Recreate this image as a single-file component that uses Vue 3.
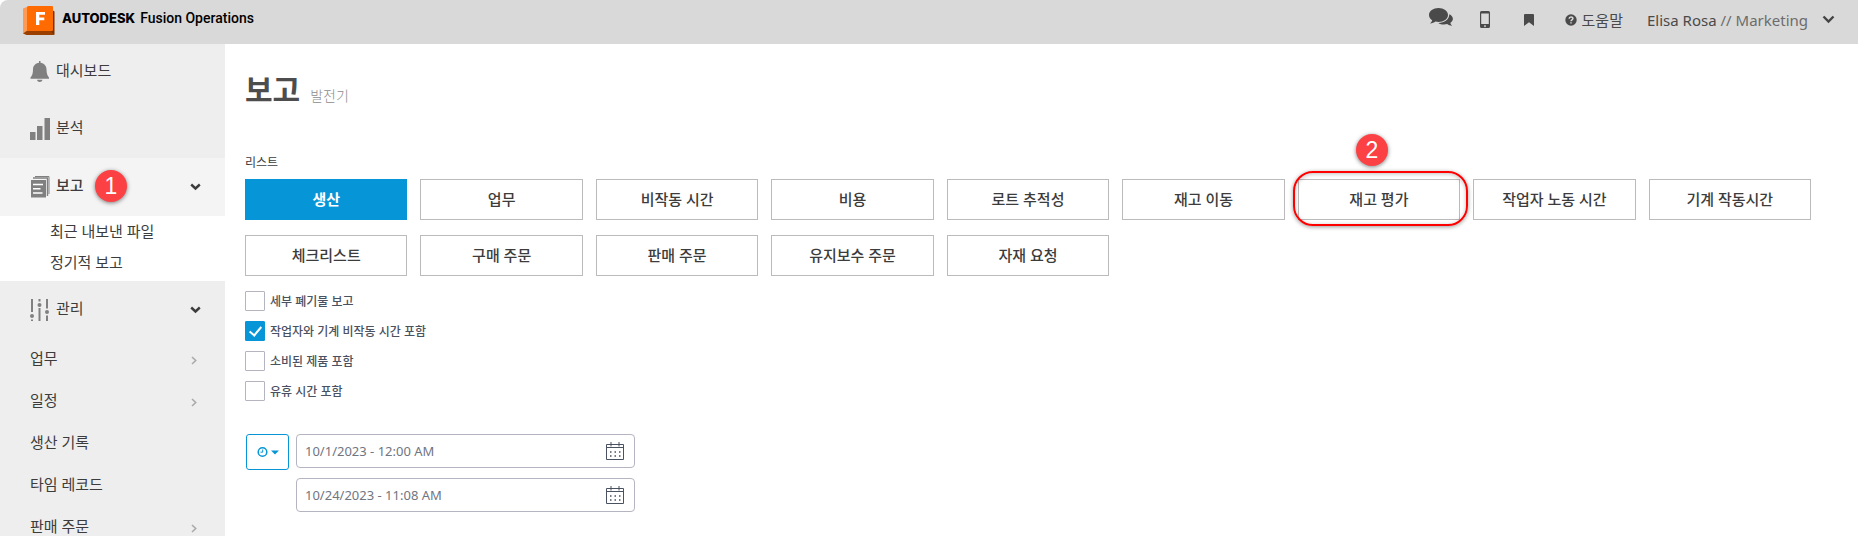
<script setup>
import { ref } from 'vue'

const reports = [
  '생산', '업무', '비작동 시간', '비용', '로트 추적성', '재고 이동', '재고 평가', '작업자 노동 시간', '기계 작동시간',
  '체크리스트', '구매 주문', '판매 주문', '유지보수 주문', '자재 요청',
]
const selected = ref('생산')

const options = ref([
  { id: 'scrap', label: '세부 폐기물 보고', on: false },
  { id: 'downtime', label: '작업자와 기계 비작동 시간 포함', on: true },
  { id: 'consumed', label: '소비된 제품 포함', on: false },
  { id: 'idle', label: '유휴 시간 포함', on: false },
])

const dates = ref([
  { id: 'from', name: '시작', value: '10/1/2023 - 12:00 AM' },
  { id: 'to', name: '종료', value: '10/24/2023 - 11:08 AM' },
])

const manage = [
  { label: '업무', more: true },
  { label: '일정', more: true },
  { label: '생산 기록', more: false },
  { label: '타임 레코드', more: false },
  { label: '판매 주문', more: true },
]
</script>

<template>
  <div class="page">
    <header class="topbar">
      <a class="brand" href="#">
        <svg class="logo" width="32" height="30" viewBox="0 0 32 30" aria-hidden="true">
          <path d="M0 2.500 5 .5V25L0 27.500Z" fill="#ff9a55" />
          <path d="M0 27.500 5 24H31v5H3.500Z" fill="#9a3f00" />
          <path d="M30 4.500l1.500 1V29l-3-3Z" fill="#7c3200" />
          <path d="M5.500 0H29q1 0 1 1v23q0 1-1 1H4V1.500Q4 0 5.500 0Z" fill="#ff6b00" />
          <path d="M13 6h9v2.800h-5.700v2.700h5v2.700h-5V19H13Z" fill="#fff" />
        </svg>
        <span class="brand-name">AUTODESK</span>
        <span class="brand-product">Fusion Operations</span>
      </a>
      <nav class="tools">
        <a class="chat" href="#" aria-label="메시지">
          <svg width="24" height="20" viewBox="0 0 24 20">
            <path d="M9.500 0C14.700 0 19 3.100 19 7s-4.300 7-9.500 7c-1 0-2-.1-2.900-.4C5 14.700 3.200 15.400 1 15.500c1-.9 1.900-2 2.200-3.200C1.200 11 0 9.100 0 7c0-3.900 4.300-7 9.500-7Z" />
            <path d="M20.300 6.200c2.200 1 3.600 2.700 3.600 4.600 0 1.700-1 3.200-2.600 4.200.3 1 1 2 1.900 2.900-1.900-.1-3.700-.8-5-1.800-3.400.8-6.900.2-8.900-1.200 6.300 0 11-3.600 11-8.700Z" />
          </svg>
        </a>
        <a class="phone" href="#" aria-label="모바일">
          <svg width="10" height="17" viewBox="0 0 10 17">
            <path fill-rule="evenodd" d="M1.500 0h7Q10 0 10 1.500v14q0 1.500-1.500 1.500h-7Q0 17 0 15.500v-14Q0 0 1.500 0ZM1.200 2.500v10.600h7.600V2.500ZM5 14.200a.9.9 0 1 0 .01 0Z" />
          </svg>
        </a>
        <a class="mark" href="#" aria-label="북마크">
          <svg width="10" height="12" viewBox="0 0 10 12"><path d="M1 0h8q1 0 1 1v11L5 8.200 0 12V1q0-1 1-1Z" /></svg>
        </a>
        <a class="help" href="#">
          <svg width="12" height="12" viewBox="0 0 12 12">
            <circle cx="6" cy="6" r="5.700" />
            <path d="M4.100 4.700C4.200 2.300 8 2.400 7.900 4.500 7.900 5.800 6 5.900 6 7.200M6 8.300v1.300" fill="none" stroke="#d9d9d9" stroke-width="1.500" />
          </svg>
          <span>도움말</span>
        </a>
        <button class="user" type="button">
          <span>Elisa Rosa <span class="team">// Marketing</span></span>
          <svg width="13" height="9" viewBox="0 0 13 9"><path d="M1.500 1.500l5 5 5-5" fill="none" stroke="#444" stroke-width="2.400" /></svg>
        </button>
      </nav>
    </header>

    <div class="body">
      <aside class="sidebar">
        <a class="item first" href="#">
          <svg class="icon" width="20" height="22" viewBox="0 0 20 22">
            <path d="M9 0h1.500v1.800C14 2.300 16.400 4.800 16.500 8.300c.1 4.200.8 6.500 2.500 8.200v1.200H.5v-1.200C2.200 14.800 3 12.500 3 8.300 3.100 4.800 5.500 2.300 9 1.800ZM7 18.800h5.500c-.5 2.900-5 2.900-5.500 0Z" />
          </svg>
          <span>대시보드</span>
        </a>
        <a class="item" href="#">
          <svg class="icon" width="20" height="22" viewBox="0 0 20 22">
            <path d="M0 14h5.500v8H0ZM7 8h5.500v14H7ZM14.500 0H20v22h-5.500Z" />
          </svg>
          <span>분석</span>
        </a>
        <a class="item active" href="#">
          <svg class="icon" width="20" height="22" viewBox="0 0 20 22">
            <path d="M5 .5h14V18" fill="none" stroke="#808080" />
            <path d="M3 2h14.500v18M2 3.500" fill="none" stroke="#808080" stroke-width="1.400" />
            <path d="M1 4h15v17.500H1Z" />
            <path d="M3 8.500h10M3 12.800h7.500M3 17h9.500" stroke="#fff" stroke-width="1.500" />
          </svg>
          <span>보고</span>
          <b class="badge step-one">1</b>
          <svg class="caret" width="11" height="8" viewBox="0 0 11 8"><path d="M1.200 1.500l4.300 4 4.300-4" /></svg>
        </a>
        <div class="submenu">
          <a href="#">최근 내보낸 파일</a>
          <a href="#">정기적 보고</a>
        </div>
        <a class="item" href="#">
          <svg class="icon" width="20" height="22" viewBox="0 0 20 22">
            <path d="M2 0v13M2 20.500V22M9.500 0v2.500M9.500 9v13M17 0v9.500M17 16.500V22" stroke="#808080" stroke-width="2" />
            <circle cx="2" cy="17" r="2" /><circle cx="9.500" cy="6" r="2" /><circle cx="17" cy="13" r="2" />
          </svg>
          <span>관리</span>
          <svg class="caret" width="11" height="8" viewBox="0 0 11 8"><path d="M1.200 1.500l4.300 4 4.300-4" /></svg>
        </a>
        <a v-for="m in manage" :key="m.label" class="item leaf" href="#">
          <span>{{ m.label }}</span>
          <svg v-if="m.more" class="caret next" width="6" height="9" viewBox="0 0 6 9"><path d="M1 1l3.700 3.500L1 8" /></svg>
        </a>
      </aside>

      <main class="content">
        <h1>보고 <small>발전기</small></h1>
        <p class="caption">리스트</p>
        <div class="grid">
          <div v-for="r in reports" :key="r" class="cell">
            <button type="button" :class="['report', { on: r === selected }]" @click="selected = r">{{ r }}</button>
            <template v-if="r === '재고 평가'">
              <i class="ring"></i>
              <b class="badge step-two">2</b>
            </template>
          </div>
        </div>

        <div class="options">
          <label v-for="o in options" :key="o.id" :for="o.id">
            <input :id="o.id" v-model="o.on" type="checkbox">
            <span>{{ o.label }}</span>
          </label>
        </div>

        <div class="period">
          <button class="preset" type="button" aria-label="기간 선택">
            <svg width="22" height="12" viewBox="0 0 22 12">
              <circle cx="5.500" cy="6" r="4.300" fill="none" stroke="#0696d7" stroke-width="1.500" />
              <path d="M5.700 3.500v2.700H3.500" fill="none" stroke="#0696d7" />
              <path d="M14 4.500h8l-4 4Z" fill="#0696d7" />
            </svg>
          </button>
          <div class="dates">
            <div v-for="d in dates" :key="d.id" class="date">
              <input v-model="d.value" type="text" :aria-label="d.name">
              <svg width="18" height="18" viewBox="0 0 18 18" fill="none" stroke="#4a5160">
                <path d="M.5 2.500h17v15H.5ZM.5 5.500h17M5 0v4.500M13 0v4.500" />
                <path d="M4 10h11M4 14h11" stroke-width="1.400" stroke-dasharray="1.500 3" />
              </svg>
            </div>
          </div>
        </div>
      </main>
    </div>
  </div>
</template>

<style>
body {
  background: #fff;
}
</style>

<style scoped>
* {
  box-sizing: border-box;
}

.page {
  display: flex;
  flex-direction: column;
  height: 100vh;
  overflow: hidden;
  font-family: "Noto Sans", "Noto Sans CJK KR", sans-serif;
  font-size: 15px;
  color: #3c3c3c;
}

a {
  color: inherit;
  text-decoration: none;
}

button,
input {
  margin: 0;
  font-family: inherit;
  color: inherit;
}

svg {
  display: block;
  flex: none;
}

.topbar {
  display: flex;
  flex: none;
  align-items: center;
  justify-content: space-between;
  height: 44px;
  padding: 0 23px;
  background: #d9d9d9;
  border-top-left-radius: 8px;
}

.brand {
  display: flex;
  align-items: center;
  padding-bottom: 3px;
  color: #000;
}

.brand-name {
  margin: 0 5px 5px 7px;
  font: 800 13px/20px Inter, sans-serif;
}

.brand-product {
  margin-bottom: 5px;
  font: 500 14px/20px Roboto, sans-serif;
}

.tools {
  display: flex;
  align-items: center;
  padding-bottom: 5px;
  fill: #4a4a4a;
  color: #4a4a4a;
}

.chat {
  padding-bottom: 4px;
}

.phone {
  margin-left: 27px;
}

.mark {
  margin-left: 34px;
}

.help {
  display: flex;
  align-items: center;
  gap: 5px;
  margin-left: 31px;
}

.user {
  display: flex;
  align-items: center;
  gap: 14px;
  margin-left: 24px;
  padding: 0;
  border: 0;
  background: none;
  font-size: 15px;
  cursor: pointer;
}

.team {
  color: #6c6c6c;
}

.body {
  display: flex;
  flex: 1;
  min-height: 0;
}

.sidebar {
  flex: none;
  width: 225px;
  overflow: hidden;
  background: #eee;
}

.item {
  position: relative;
  display: flex;
  align-items: center;
  gap: 6px;
  height: 58px;
  padding: 0 24px 0 30px;
}

.item span {
  padding-bottom: 6px;
}

.first {
  height: 56px;
}

.active {
  background: #f4f4f4;
  font-weight: 500;
}

.leaf {
  height: 42px;
}

.icon {
  fill: #808080;
}

.caret {
  margin-left: auto;
  fill: none;
  stroke: #3c3c3c;
  stroke-width: 2.4;
}

.next {
  margin-right: 4px;
  stroke: #aaa;
  stroke-width: 1.6;
}

.submenu {
  padding-bottom: 3px;
  background: #fff;
}

.submenu a {
  display: block;
  padding-left: 50px;
  line-height: 31px;
}

.badge {
  position: absolute;
  width: 32px;
  height: 32px;
  border-radius: 50%;
  background: #fc4144;
  box-shadow: 0 1px 4px rgba(0, 0, 0, 0.5);
  color: #fff;
  font: 400 23px/32px "Liberation Sans", sans-serif;
  text-align: center;
}

.step-one {
  top: 12px;
  left: 95px;
}

.step-two {
  top: -45px;
  left: calc(50% - 23px);
}

.content {
  flex: 1;
  min-width: 0;
  padding: 24px 47px 24px 20px;
}

h1 {
  display: flex;
  align-items: baseline;
  gap: 10px;
  height: 44px;
  margin: 0;
  font-size: 30px;
  line-height: 44px;
  color: #4d4d4d;
}

h1 small {
  font-size: 14px;
  font-weight: 300;
  color: #8c8c8c;
}

.caption {
  margin: 41px 0 6px;
  font-size: 12px;
  line-height: 20px;
}

.grid {
  display: grid;
  grid-template-columns: repeat(9, 1fr);
  gap: 15px 13px;
}

.cell {
  position: relative;
}

.report {
  display: block;
  width: 100%;
  height: 41px;
  padding: 0 0 3px;
  border: 1px solid #bbb;
  background: #fff;
  font-size: 15px;
  font-weight: 500;
  cursor: pointer;
}

.report.on {
  border-color: #0696d7;
  background: #0696d7;
  color: #fff;
  font-weight: 700;
}

.ring {
  position: absolute;
  inset: -8px -8px -6px -5px;
  border: 2px solid #f00;
  border-radius: 20px;
  box-shadow: 0 1px 4px rgba(0, 0, 0, 0.4), inset 0 1px 4px rgba(0, 0, 0, 0.25);
  pointer-events: none;
}

.options {
  display: flex;
  flex-direction: column;
  align-items: flex-start;
  gap: 10px;
  margin-top: 15px;
}

.options label {
  display: flex;
  align-items: center;
  gap: 5px;
  height: 20px;
  font-size: 12px;
  font-weight: 500;
  color: #4a5160;
}

.options span {
  padding-bottom: 1px;
}

.options input {
  display: grid;
  place-items: center;
  width: 20px;
  height: 20px;
  border: 1px solid #b4b5c0;
  border-radius: 1px;
  appearance: none;
  background: #fff;
}

.options input:checked {
  border-color: #0696d7;
  background: #0696d7;
}

.options input:checked::before {
  content: "";
  width: 5px;
  height: 10px;
  margin-bottom: 3px;
  border: solid #fff;
  border-width: 0 2px 2px 0;
  transform: rotate(40deg);
}

.period {
  display: flex;
  align-items: flex-start;
  gap: 7px;
  margin: 33px 0 0 1px;
}

.preset {
  display: grid;
  place-items: center;
  width: 43px;
  height: 36px;
  padding: 0;
  border: 1px solid #0696d7;
  border-radius: 3px;
  background: #fff;
}

.dates {
  display: grid;
  gap: 10px;
  width: 339px;
}

.date {
  display: flex;
  align-items: center;
  height: 34px;
  padding: 0 10px 0 8px;
  border: 1px solid #b4b5c0;
  border-radius: 4px;
}

.date input {
  flex: 1;
  min-width: 0;
  padding: 0;
  border: 0;
  outline: 0;
  background: none;
  font-size: 13px;
  color: #71757f;
}
</style>
